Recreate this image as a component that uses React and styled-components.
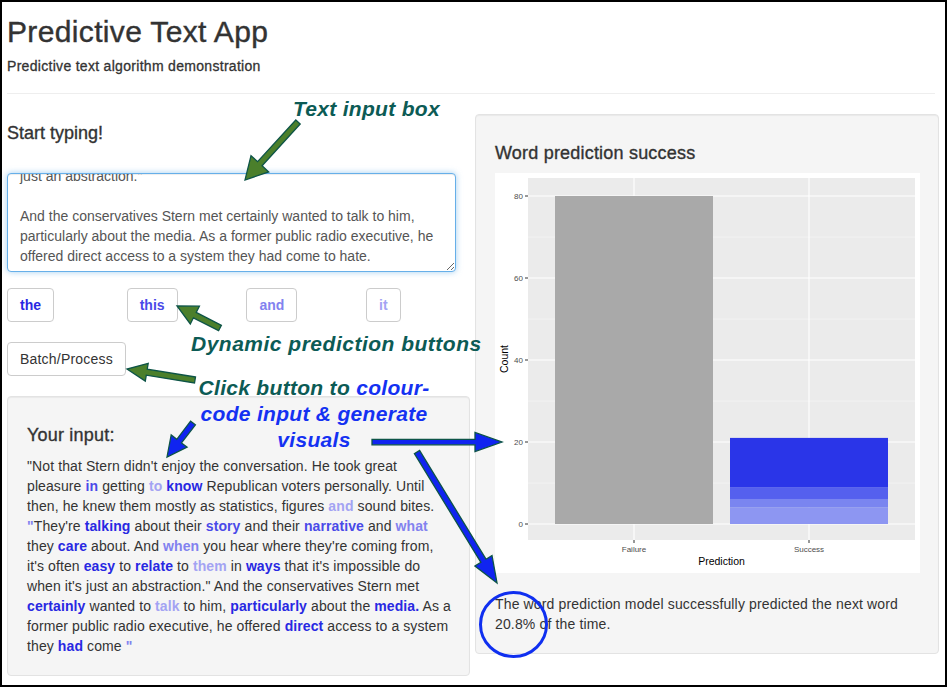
import React, { useEffect, useRef } from "react";
import styled, { createGlobalStyle } from "styled-components";

const GlobalStyle = createGlobalStyle`
  body {
    margin: 0;
    background: #fff;
    font-family: "Liberation Sans", Arial, sans-serif;
    color: #333;
  }
`;

const WORD_COLORS = {
  1: "#2828e2",
  2: "#4a4ae8",
  3: "#8282ef",
  4: "#a3a3f3",
};

const Frame = styled.div`
  position: relative;
  width: 947px;
  height: 687px;
  box-sizing: border-box;
  border: 2px solid #000;
  overflow: hidden;
  padding: 12.5px 6px 0 5px;
`;

const Title = styled.h1`
  margin: 0;
  font-size: 30px;
  line-height: 1.1;
  font-weight: 400;
  letter-spacing: 0.35px;
  -webkit-text-stroke: 0.4px #333;
`;

const Subtitle = styled.h4`
  margin: 8.5px 0 0;
  font-size: 14px;
  line-height: 20px;
  font-weight: 400;
  letter-spacing: 0.3px;
  -webkit-text-stroke: 0.3px #333;
`;

const Divider = styled.hr`
  margin: 17px 4px 0 0;
  border: 0;
  border-top: 1px solid #eee;
`;

const Columns = styled.div`
  display: grid;
  grid-template-columns: 463px 464px;
  column-gap: 5px;
  align-items: start;
`;

const Sidebar = styled.div`
  display: flex;
  flex-direction: column;
`;

const SectionHeading = styled.h3`
  margin: 30px 0 0;
  font-size: 18px;
  line-height: 1.1;
  font-weight: 400;
  -webkit-text-stroke: 0.35px #333;
`;

const InputBox = styled.textarea`
  margin-top: 29px;
  width: 449px;
  height: 99px;
  box-sizing: border-box;
  padding: 6px 6px 5px 12px;
  border: 1px solid #66afe9;
  border-radius: 4px;
  box-shadow: inset 0 1px 1px rgba(0, 0, 0, 0.075), 0 0 6px rgba(102, 175, 233, 0.6);
  font-family: "Liberation Sans", Arial, sans-serif;
  font-size: 14px;
  line-height: 20px;
  color: #555;
  outline: none;
  scrollbar-width: none;
  white-space: pre-wrap;
`;

const PredictionRow = styled.div`
  margin-top: 16px;
  display: grid;
  grid-template-columns: repeat(4, 119.7px);
  justify-items: start;
`;

const Button = styled.button`
  height: 34px;
  box-sizing: border-box;
  padding: 6px 12px;
  background: #fff;
  border: 1px solid #ccc;
  border-radius: 4px;
  font-family: "Liberation Sans", Arial, sans-serif;
  font-size: 14px;
  line-height: 20px;
  color: #333;
  cursor: pointer;
`;

const PredictionButton = styled(Button)`
  font-weight: 700;
  color: ${({ $level }) => WORD_COLORS[$level]};
`;

const ActionButton = styled(Button)`
  margin-top: 20px;
  align-self: flex-start;
  letter-spacing: 0.2px;
`;

const Well = styled.div`
  margin-top: ${({ $top }) => $top}px;
  box-sizing: border-box;
  padding: 19px;
  background: #f5f5f5;
  border: 1px solid #e3e3e3;
  border-radius: 4px;
  box-shadow: inset 0 1px 1px rgba(0, 0, 0, 0.05);
`;

const WellTitle = styled.h3`
  margin: 10px 0 0;
  font-size: 18px;
  line-height: 1.1;
  font-weight: 400;
  -webkit-text-stroke: 0.35px #333;
  letter-spacing: 0.2px;
`;

const InputText = styled.div`
  margin-top: 10px;
  font-size: 14px;
  line-height: 20px;
  letter-spacing: 0.1px;
`;

const Line = styled.div`
  white-space: nowrap;
`;

const Word = styled.span`
  font-weight: 700;
  color: ${({ $level }) => WORD_COLORS[$level]};
`;

const PlotBox = styled.div`
  margin-top: 9px;
  width: 425px;
  height: 400px;
  background: #fff;
`;

const Caption = styled.p`
  margin: 21px 0 0;
  font-size: 14px;
  line-height: 20px;
  letter-spacing: 0.15px;
`;

const Overlay = styled.div`
  position: absolute;
  top: -2px;
  left: -2px;
  width: 947px;
  height: 687px;
  pointer-events: none;
`;

const Note = styled.div`
  position: absolute;
  top: ${({ $top }) => $top}px;
  left: ${({ $left }) => $left}px;
  width: ${({ $width }) => ($width ? `${$width}px` : "auto")};
  font-size: 21px;
  line-height: 26px;
  font-weight: 700;
  font-style: italic;
  letter-spacing: ${({ $spacing }) => $spacing || 0.3}px;
  text-align: center;
  white-space: nowrap;
  color: #0c5b55;
`;

const Blue = styled.span`
  color: #1431f2;
`;

const typed = `"Not that Stern didn't enjoy the conversation. He took great pleasure in getting to know Republican voters personally. Until then, he knew them mostly as statistics, figures and sound bites. "They're talking about their story and their narrative and what they care about. And when you hear where they're coming from, it's often easy to relate to them in ways that it's impossible do when it's
just an abstraction."

And the conservatives Stern met certainly wanted to talk to him,
particularly about the media. As a former public radio executive, he
offered direct access to a system they had come to hate.`;

const predictions = [
  { word: "the", level: 1 },
  { word: "this", level: 2 },
  { word: "and", level: 3 },
  { word: "it", level: 4 },
];

const inputLines = [
  ['"Not that Stern didn\'t enjoy the conversation. He took great'],
  ["pleasure ", [2, "in"], " getting ", [4, "to"], " ", [1, "know"], " Republican voters personally. Until"],
  ["then, he knew them mostly as statistics, figures ", [4, "and"], " sound bites."],
  [[3, '"'], "They're ", [1, "talking"], " about their ", [2, "story"], " and their ", [2, "narrative"], " and ", [3, "what"]],
  ["they ", [1, "care"], " about. And ", [3, "when"], " you hear where they're coming from,"],
  ["it's often ", [1, "easy"], " to ", [1, "relate"], " to ", [4, "them"], " in ", [1, "ways"], " that it's impossible do"],
  ['when it\'s just an abstraction." And the conservatives Stern met'],
  [[1, "certainly"], " wanted to ", [4, "talk"], " to him, ", [1, "particularly"], " about the ", [1, "media."], " As a"],
  ["former public radio executive, he offered ", [1, "direct"], " access to a system"],
  ["they ", [1, "had"], " come ", [3, '"']],
];

// chart scale: value -> y inside the plot svg
const yAt = (v) => 351 - v * 4.1;
const successParts = [
  { from: 0, to: 4, fill: "#8d96f2" },
  { from: 4, to: 6.1, fill: "#7a85f0" },
  { from: 6.1, to: 9, fill: "#5560ee" },
  { from: 9, to: 21, fill: "#2a35e8" },
];

function PredictionChart() {
  return (
    <svg width="425" height="400" viewBox="0 0 425 400">
      <rect x="33" y="5" width="387" height="362" fill="#ebebeb" />
      {[10, 30, 50, 70].map((v) => (
        <line key={v} x1="33" x2="420" y1={yAt(v)} y2={yAt(v)} stroke="#f6f6f6" strokeWidth="0.6" />
      ))}
      {[0, 20, 40, 60, 80].map((v) => (
        <line key={v} x1="33" x2="420" y1={yAt(v)} y2={yAt(v)} stroke="#fff" strokeWidth="1.1" />
      ))}
      {[139, 314].map((x) => (
        <line key={x} x1={x} x2={x} y1="5" y2="367" stroke="#fff" strokeWidth="1.1" />
      ))}
      <rect x="60" y={yAt(80)} width="158" height={80 * 4.1} fill="#a9a9a9" />
      {successParts.map((p) => (
        <rect key={p.from} x="235" y={yAt(p.to)} width="158" height={(p.to - p.from) * 4.1} fill={p.fill} />
      ))}
      {[0, 20, 40, 60, 80].map((v) => (
        <g key={v}>
          <line x1="30" x2="33" y1={yAt(v)} y2={yAt(v)} stroke="#333" strokeWidth="1" />
          <text x="28" y={yAt(v) + 3} textAnchor="end" fontSize="8" fill="#4d4d4d" fontFamily="Liberation Sans, Arial, sans-serif">
            {v}
          </text>
        </g>
      ))}
      {[
        [139, "Failure"],
        [314, "Success"],
      ].map(([x, label]) => (
        <g key={label}>
          <line x1={x} x2={x} y1="367" y2="370" stroke="#333" strokeWidth="1" />
          <text x={x} y="379" textAnchor="middle" fontSize="8" fill="#4d4d4d" fontFamily="Liberation Sans, Arial, sans-serif">
            {label}
          </text>
        </g>
      ))}
      <text x="226.5" y="392" textAnchor="middle" fontSize="10.5" fill="#000" fontFamily="Liberation Sans, Arial, sans-serif">
        Prediction
      </text>
      <text
        transform="translate(13 186) rotate(-90)"
        textAnchor="middle"
        fontSize="10.5"
        fill="#000"
        fontFamily="Liberation Sans, Arial, sans-serif"
      >
        Count
      </text>
    </svg>
  );
}

function arrowPoints([x1, y1], [x2, y2], shaft, headW, headL) {
  const len = Math.hypot(x2 - x1, y2 - y1);
  const ux = (x2 - x1) / len;
  const uy = (y2 - y1) / len;
  const nx = -uy;
  const ny = ux;
  const bx = x2 - ux * headL;
  const by = y2 - uy * headL;
  const pt = (x, y, k) => `${(x + nx * k).toFixed(1)},${(y + ny * k).toFixed(1)}`;
  return [
    pt(x1, y1, shaft / 2),
    pt(bx, by, shaft / 2),
    pt(bx, by, headW / 2),
    `${x2},${y2}`,
    pt(bx, by, -headW / 2),
    pt(bx, by, -shaft / 2),
    pt(x1, y1, -shaft / 2),
  ].join(" ");
}

const arrows = [
  { from: [298, 122], to: [245, 180], fill: "#4b7f2b", shaft: 6, headW: 24, headL: 22 },
  { from: [220, 328], to: [177, 306], fill: "#4b7f2b", shaft: 6, headW: 20, headL: 20 },
  { from: [195, 380], to: [127, 369], fill: "#4b7f2b", shaft: 6, headW: 18, headL: 20 },
  { from: [193, 423], to: [167, 457], fill: "#1024f0", shaft: 6, headW: 20, headL: 20 },
  { from: [372, 442], to: [502, 442], fill: "#1024f0", shaft: 5.5, headW: 19, headL: 27 },
  { from: [417, 452], to: [497, 583], fill: "#1024f0", shaft: 6, headW: 20, headL: 26 },
];

function Annotations() {
  return (
    <Overlay>
      <svg width="947" height="687" style={{ position: "absolute", top: 0, left: 0 }}>
        {arrows.map((a, i) => (
          <polygon
            key={i}
            points={arrowPoints(a.from, a.to, a.shaft, a.headW, a.headL)}
            fill={a.fill}
            stroke="#0d5447"
            strokeWidth="1.3"
            strokeLinejoin="miter"
          />
        ))}
        <ellipse cx="513.5" cy="624.5" rx="33" ry="32" fill="none" stroke="#0f2ff0" strokeWidth="3" />
      </svg>
      <Note $top={96} $left={293}>Text input box</Note>
      <Note $top={331} $left={191} $spacing={0.5}>
        Dynamic prediction buttons
      </Note>
      <Note $top={375} $left={189} $width={250}>
        Click button to <Blue>colour-</Blue>
        <br />
        <Blue>code input &amp; generate</Blue>
        <br />
        <Blue>visuals</Blue>
      </Note>
    </Overlay>
  );
}

export default function App() {
  const boxRef = useRef(null);

  useEffect(() => {
    if (boxRef.current) boxRef.current.scrollTop = boxRef.current.scrollHeight;
  }, []);

  return (
    <>
      <GlobalStyle />
      <Frame>
        <Title>Predictive Text App</Title>
        <Subtitle>Predictive text algorithm demonstration</Subtitle>
        <Divider />
        <Columns>
          <Sidebar>
            <SectionHeading>Start typing!</SectionHeading>
            <InputBox ref={boxRef} defaultValue={typed} spellCheck={false} />
            <PredictionRow>
              {predictions.map((p) => (
                <PredictionButton key={p.word} $level={p.level}>
                  {p.word}
                </PredictionButton>
              ))}
            </PredictionRow>
            <ActionButton>Batch/Process</ActionButton>
            <Well $top={20}>
              <WellTitle>Your input:</WellTitle>
              <InputText>
                {inputLines.map((parts, i) => (
                  <Line key={i}>
                    {parts.map((part, j) =>
                      typeof part === "string" ? (
                        <React.Fragment key={j}>{part}</React.Fragment>
                      ) : (
                        <Word key={j} $level={part[0]}>
                          {part[1]}
                        </Word>
                      )
                    )}
                  </Line>
                ))}
              </InputText>
            </Well>
          </Sidebar>
          <Well $top={20}>
            <WellTitle>Word prediction success</WellTitle>
            <PlotBox>
              <PredictionChart />
            </PlotBox>
            <Caption>
              The word prediction model successfully predicted the next word 20.8% of the time.
            </Caption>
          </Well>
        </Columns>
        <Annotations />
      </Frame>
    </>
  );
}
